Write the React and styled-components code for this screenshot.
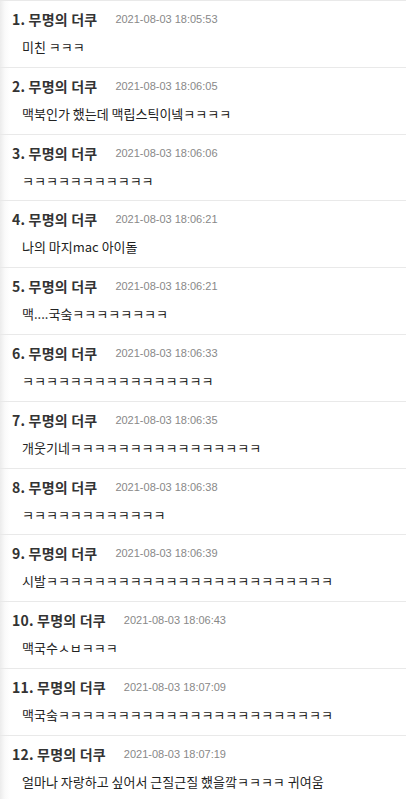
import React from 'react';
import styled, { createGlobalStyle } from 'styled-components';

const GlobalStyle = createGlobalStyle`
    html, body {
        margin: 0;
        padding: 0;
        background: #fff;
    }
`;

const List = styled.div`
    width: 406px;
    background: linear-gradient(to right, #ececec 0px, #fafafa 5px, #fff 10px);
    font-family: "Noto Sans CJK KR", "Noto Sans", sans-serif;
`;

const Item = styled.div`
    height: 66.8px;
    box-sizing: border-box;
    border-top: 1px solid #e9e9e9;
    padding: 10px 12px 0;
`;

const Header = styled.div`
    display: flex;
    align-items: center;
    height: 16px;
    line-height: 16px;

    .name {
        font-size: 14px;
        font-weight: 700;
        color: #333;
        letter-spacing: 0.2px;
    }

    .date {
        margin-left: 18px;
        font-family: "Liberation Sans", Arial, sans-serif;
        font-size: 11px;
        color: #888;
    }
`;

const Content = styled.div`
    margin-top: 12px;
    padding-left: 10px;
    font-size: 13px;
    line-height: 16px;
    color: #222;
    white-space: nowrap;
`;

const k = n => 'ㅋ'.repeat(n);

const comments = [
    { date: '18:05:53', text: '미친 ' + k(3) },
    { date: '18:06:05', text: '맥북인가 했는데 맥립스틱이넼' + k(4) },
    { date: '18:06:06', text: k(11) },
    { date: '18:06:21', text: '나의 마지mac 아이돌' },
    { date: '18:06:21', text: '맥....국숰' + k(8) },
    { date: '18:06:33', text: k(16) },
    { date: '18:06:35', text: '개웃기네' + k(16) },
    { date: '18:06:38', text: k(12) },
    { date: '18:06:39', text: '시발' + k(24) },
    { date: '18:06:43', text: '맥국수ㅅㅂ' + k(3) },
    { date: '18:07:09', text: '맥국숰' + k(23) },
    { date: '18:07:19', text: '얼마나 자랑하고 싶어서 근질근질 했을깤' + k(4) + ' 귀여움' },
];

const App = () => {
    return (
        <>
            <GlobalStyle />
            <List>
                {comments.map((c, i) => (
                    <Item key={i}>
                        <Header>
                            <span className="name">{i + 1}. 무명의 더쿠</span>
                            <span className="date">2021-08-03 {c.date}</span>
                        </Header>
                        <Content>{c.text}</Content>
                    </Item>
                ))}
            </List>
        </>
    );
};

export default App;
